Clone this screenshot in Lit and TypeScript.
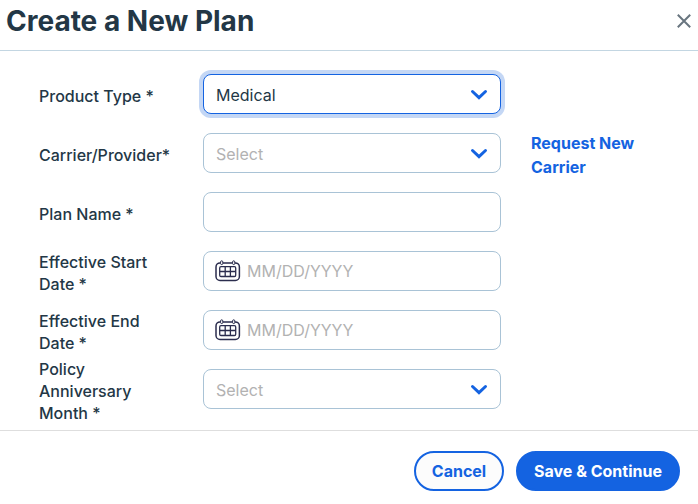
import { LitElement, html, css, svg, nothing } from "lit";
import { customElement } from "lit/decorators.js";
import { classMap } from "lit/directives/class-map.js";

type Field = {
  label: string;
  kind: "select" | "text" | "date";
  value?: string;
  placeholder?: string;
  focused?: boolean;
  link?: string;
};

const FIELDS: Field[] = [
  { label: "Product Type *", kind: "select", value: "Medical", focused: true },
  { label: "Carrier/Provider*", kind: "select", placeholder: "Select", link: "Request New Carrier" },
  { label: "Plan Name *", kind: "text" },
  { label: "Effective Start Date *", kind: "date", placeholder: "MM/DD/YYYY" },
  { label: "Effective End Date *", kind: "date", placeholder: "MM/DD/YYYY" },
  { label: "Policy Anniversary Month *", kind: "select", placeholder: "Select" },
];

const chevron = html`<svg class="chevron" width="18" height="12" viewBox="0 0 18 12">
  ${svg`<path d="M2.5 2.5L9 8.6L15.5 2.5" fill="none" stroke="#1463e1" stroke-width="3" stroke-linecap="round" stroke-linejoin="miter" />`}
</svg>`;

const calendar = html`<svg class="calendar" width="26" height="22" viewBox="0 0 26 22">
  ${svg`
    <g fill="none" stroke="#2b2d4e">
      <rect x="1" y="2.9" width="23.4" height="17.6" rx="4" stroke-width="1.5" />
      <rect x="4.7" y="6.6" width="16" height="9.9" rx="1.3" stroke-width="1.3" />
      <path d="M10.2 6.6V16.5M15.4 6.6V16.5M4.7 11.5H20.7" stroke-width="1.3" />
      <rect x="5.6" y="0.8" width="2.2" height="3.8" rx="1.1" fill="#fff" stroke-width="1" />
      <rect x="17.6" y="0.8" width="2.2" height="3.8" rx="1.1" fill="#fff" stroke-width="1" />
    </g>`}
</svg>`;

@customElement("app-root")
export class AppRoot extends LitElement {
  static styles = css`
    :host {
      display: flex;
      flex-direction: column;
      box-sizing: border-box;
      width: 698px;
      height: 504px;
      overflow: hidden;
      background: #fff;
      color: #233746;
      font: 400 16px/22px Inter, "Liberation Sans", sans-serif;
    }
    * { box-sizing: border-box; }
    header {
      display: flex;
      justify-content: space-between;
      flex: none;
      height: 51px;
      padding: 0 7px 0 6px;
      border-bottom: 1px solid #c3d6e2;
    }
    h1 {
      margin: 0;
      font-size: 28px;
      line-height: 42px;
      font-weight: 700;
    }
    .close {
      margin-top: 14px;
      padding: 0;
      border: 0;
      width: 14px;
      height: 14px;
      background: none;
    }
    .close svg { display: block; }
    main {
      flex: none;
      height: 379px;
      padding: 13px 39px 0;
    }
    .row {
      display: grid;
      grid-template-columns: 134px 298px 130px;
      column-gap: 30px;
      align-items: center;
      height: 59px;
    }
    .label { padding-top: 4px; margin: -6px 0; font-weight: 500; }
    .field {
      display: flex;
      align-items: center;
      height: 40px;
      padding: 2px 12px 0;
      border: 1px solid #a9c3d6;
      border-radius: 8px;
      background: #fff;
    }
    .field.focused {
      border-color: #1463e1;
      box-shadow: 0 0 0 4px #c4d7f5;
    }
    .field.date { padding: 0 12px 0 11px; }
    .value { flex: 1; }
    .value.empty { color: #b2b2b2; }
    .calendar { margin: 0 6px 0 0; flex: none; }
    .chevron { margin-top: 1px; flex: none; }
    .link {
      width: 116px;
      padding-top: 4px;
      color: #1463e1;
      font-weight: 700;
      line-height: 24px;
      text-decoration: none;
    }
    footer {
      display: flex;
      justify-content: flex-end;
      gap: 12px;
      flex: 1;
      padding: 20px 18px 0;
      border-top: 1px solid #dedede;
    }
    .btn {
      height: 40px;
      padding: 0;
      border: 2px solid #1463e1;
      border-radius: 20px;
      font: inherit;
      font-weight: 700;
    }
    .cancel { width: 90px; background: #fcfcfc; color: #1463e1; }
    .save { width: 164px; background: #1463e1; color: #fff; }
  `;

  private renderRow(f: Field) {
    const text = f.value ?? f.placeholder ?? "";
    return html`<div class="row">
      <div class="label">${f.label}</div>
      <div class=${classMap({ field: true, focused: !!f.focused, date: f.kind === "date" })}>
        ${f.kind === "date" ? calendar : nothing}
        <span class=${classMap({ value: true, empty: !f.value })}>${text}</span>
        ${f.kind === "select" ? chevron : nothing}
      </div>
      ${f.link ? html`<a class="link">${f.link}</a>` : nothing}
    </div>`;
  }

  render() {
    return html`
      <header>
        <h1>Create a New Plan</h1>
        <button class="close" aria-label="Close">
          <svg width="14" height="14" viewBox="0 0 14 14">
            <path d="M0.8 0.8L13.2 13.2M13.2 0.8L0.8 13.2" fill="none" stroke="#68757f" stroke-width="2" />
          </svg>
        </button>
      </header>
      <main>${FIELDS.map((f) => this.renderRow(f))}</main>
      <footer>
        <button class="btn cancel">Cancel</button>
        <button class="btn save">Save &amp; Continue</button>
      </footer>
    `;
  }
}
